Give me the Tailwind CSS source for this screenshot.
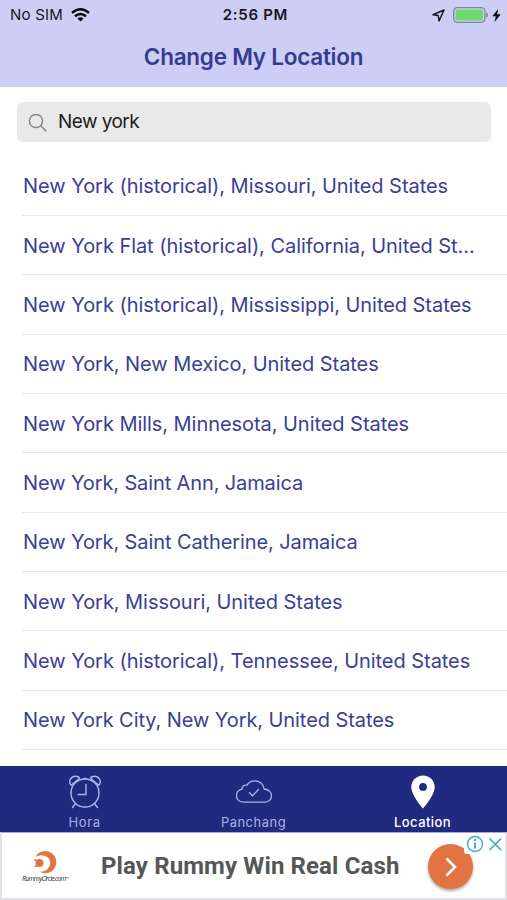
<!DOCTYPE html>
<html lang="en">
<head>
<meta charset="utf-8">
<title>Change My Location</title>
<script src="https://cdn.jsdelivr.net/npm/@tailwindcss/browser@4"></script>
</head>
<body class="bg-white">
<div class="w-[507px] h-[900px] overflow-hidden flex flex-col bg-[#fefefe] font-['Inter',sans-serif]">
  <header class="h-[87px] shrink-0 bg-[#cccef5]">
    <div class="h-[30px] grid grid-cols-3 items-center pl-[10px] pr-[6px] text-[15px] text-[#16161f]">
      <div class="flex items-center gap-[8px]">
        <span class="tracking-[0.220px] whitespace-nowrap">No SIM</span>
        <svg class="w-[19px] h-[14px]" viewBox="0 0 19 14" fill="none" stroke="#08080c" stroke-width="2.500"><path d="M1 4.900Q9.500-2.300 18 4.900M4 8.200Q9.500 3.700 15 8.200"/><path d="M6.500 10.500Q9.500 8.200 12.500 10.500L9.500 13.500Z" fill="#08080c" stroke="none"/></svg>
      </div>
      <div class="text-center font-semibold whitespace-nowrap tracking-[0.700px]">2:56 PM</div>
      <div class="flex items-center justify-end">
        <svg class="w-[13px] h-[13px] mr-[8px]" viewBox="0 0 13 13" fill="none" stroke="#16161f" stroke-width="1.500" stroke-linejoin="round"><path d="M12 1L1 5.700L6.200 6.500L7 12Z"/></svg>
        <svg class="w-[35px] h-[16px] mr-[4px]" viewBox="0 0 35 16"><rect x=".7" y=".7" width="31.300" height="14.600" rx="3.700" fill="none" stroke="#85859f" stroke-width="1.300"/><rect x="2.600" y="2.600" width="27.500" height="10.800" rx="1.800" fill="#6fd96c"/><path d="M33.200 5.200Q35 6 35 8T33.200 10.800Z" fill="#85859f"/></svg>
        <svg class="w-[9px] h-[13px]" viewBox="0 0 9 13" fill="#08080c"><path d="M6.200 0L.3 7.200H3.800L2.600 13L8.700 5.200H5.100Z"/></svg>
      </div>
    </div>
    <h1 class="h-[54px] flex items-center justify-center text-[22.500px] font-semibold tracking-[-0.250px] text-[#353b8f] whitespace-nowrap">Change My Location</h1>
  </header>

  <div class="pt-[15px] px-[17px] shrink-0">
    <div class="h-[40px] w-[474px] rounded-[6px] bg-[#e9e9e9] flex items-center pt-px pl-[11px] gap-[10px] text-[19px] text-[#1c1c1c]">
      <svg class="w-[20px] h-[20px]" viewBox="0 0 20 20" fill="none" stroke="#88888b" stroke-width="1.500"><circle cx="8" cy="8" r="6.600"/><path d="M12.800 12.800L18.300 18.400"/></svg>
      <span class="tracking-[-0.550px]">New york</span>
    </div>
  </div>

  <ul class="pt-[14.500px] pl-[22px] flex-1 min-h-0 overflow-hidden text-[20px] tracking-[-0.050px] text-[#3b4093]">
    <li class="h-[59.350px] border-b border-[#e8e8ea] flex items-center whitespace-nowrap pl-[1px] pt-px">New York (historical), Missouri, United States</li>
    <li class="h-[59.350px] border-b border-[#e8e8ea] flex items-center whitespace-nowrap pl-[1px] pt-px">New York Flat (historical), California, United St...</li>
    <li class="h-[59.350px] border-b border-[#e8e8ea] flex items-center whitespace-nowrap pl-[1px] pt-px">New York (historical), Mississippi, United States</li>
    <li class="h-[59.350px] border-b border-[#e8e8ea] flex items-center whitespace-nowrap pl-[1px] pt-px">New York, New Mexico, United States</li>
    <li class="h-[59.350px] border-b border-[#e8e8ea] flex items-center whitespace-nowrap pl-[1px] pt-px">New York Mills, Minnesota, United States</li>
    <li class="h-[59.350px] border-b border-[#e8e8ea] flex items-center whitespace-nowrap pl-[1px] pt-px tracking-[-0.120px]">New York, Saint Ann, Jamaica</li>
    <li class="h-[59.350px] border-b border-[#e8e8ea] flex items-center whitespace-nowrap pl-[1px] pt-px tracking-[-0.100px]">New York, Saint Catherine, Jamaica</li>
    <li class="h-[59.350px] border-b border-[#e8e8ea] flex items-center whitespace-nowrap pl-[1px] pt-px">New York, Missouri, United States</li>
    <li class="h-[59.350px] border-b border-[#e8e8ea] flex items-center whitespace-nowrap pl-[1px] pt-px">New York (historical), Tennessee, United States</li>
    <li class="h-[59.350px] border-b border-[#e8e8ea] flex items-center whitespace-nowrap pl-[1px] pt-px tracking-[-0.080px]">New York City, New York, United States</li>
  </ul>

  <nav class="h-[66px] shrink-0 bg-[#202a7f] grid grid-cols-3 text-[13px] text-[#a9b2e0]">
    <div class="flex flex-col items-center pt-[9px]">
      <svg class="w-[34px] h-[34px]" viewBox="0 0 34 34" fill="none" stroke="#a9b6ec" stroke-width="1.400" stroke-linecap="round"><circle cx="17" cy="18" r="14"/><path d="M18 9.500V19.500H10.200M7.500 28.500L4.500 32.500M26.500 28.500L29.500 32.500M15.800 3.500H18.200"/><path d="M3.200 10.200C-.5 6 3.500 1.200 7.500 1.200C9.500 1.200 11 2 11.500 3.200ZM30.800 10.200C34.500 6 30.500 1.200 26.500 1.200C24.500 1.200 23 2 22.500 3.200Z" stroke-linejoin="round"/></svg>
      <span class="mt-[4px] leading-[18px] tracking-[0.650px]">Hora</span>
    </div>
    <div class="flex flex-col items-center pt-[9px]">
      <svg class="w-[38px] h-[34px]" viewBox="0 0 38 34" fill="none" stroke="#a9b6ec" stroke-width="1.300" stroke-linejoin="round" stroke-linecap="round"><path d="M9 27.200C4.500 27.200 1.500 24.500 1.500 20.700C1.500 17.200 4 14.800 7 14.200C6.800 11.500 9 9.500 12 10.200C13.500 7 16.500 5.800 19.800 5.800C24.500 5.800 28.500 9.200 29.200 14C33.500 14.500 36.500 17.200 36.500 20.800C36.500 24.500 33.500 27.200 29.500 27.200Z"/><path d="M14.500 17.800L17.500 20.700L23.500 14.500"/></svg>
      <span class="mt-[4px] leading-[18px] tracking-[0.480px]">Panchang</span>
    </div>
    <div class="flex flex-col items-center pt-[9px] text-white">
      <svg class="w-[24px] h-[34px]" viewBox="0 0 24 34" fill="#fff"><path fill-rule="evenodd" d="M12 .5C5.500 .5 .3 5.500 .3 12C.3 20.500 12 33.500 12 33.500S23.700 20.500 23.700 12C23.700 5.500 18.500 .5 12 .5ZM12 8A3.900 3.900 0 1 1 12 15.800A3.900 3.900 0 1 1 12 8Z"/></svg>
      <span class="mt-[4px] leading-[18px] font-medium tracking-[0.400px]">Location</span>
    </div>
  </nav>

  <div class="h-[68px] shrink-0 relative flex items-center bg-[#fefefe] border-t border-t-[#a6a9d0] border-l-2 border-r-2 border-b-2 border-[#e2e2e4]">
    <div class="w-[46px] ml-[20px] pt-[2px] flex flex-col items-center">
      <svg class="w-[24px] h-[23px]" viewBox="0 0 24 23"><path d="M2.500 6A11 11 0 1 1 6.500 20.500Q13 21.500 16 16A7.500 7.500 0 0 0 11.500 4.700Q6 3.500 2.500 6Z" fill="#e27443"/><circle cx="6.500" cy="12" r="4" fill="#e27443"/><path d="M1.300 9L7 10M1.500 15.500L6 14" stroke="#e27443" stroke-width="1.500"/></svg>
      <span class="mt-[1px] text-[7px] leading-[8px] italic tracking-[-0.800px] text-[#333] whitespace-nowrap font-['Open_Sans',sans-serif]">RummyCircle.com<span class="text-[4px] align-top">™</span></span>
    </div>
    <div class="ml-[33px] font-['Roboto',sans-serif] font-bold text-[24px] tracking-[0.120px] text-[#555658] whitespace-nowrap">Play Rummy Win Real Cash</div>
    <div class="absolute left-[426px] top-[11px] w-[45px] h-[45px] rounded-full bg-[#e27443] shadow-[0_2px_3px_rgba(0,0,0,0.35)] flex items-center justify-center">
      <svg class="w-[12px] h-[20px]" viewBox="0 0 12 20" fill="none" stroke="#fff" stroke-width="2.600"><path d="M1.500 1.500L10 10L1.500 18.500"/></svg>
    </div>
    <svg class="absolute left-[462px] top-0 w-[41px] h-[21px]" viewBox="0 0 41 21" fill="none" stroke="#42a7cc"><path d="M0 0H41V21H3Q0 21 0 18Z" fill="#fefefe" stroke="none"/><circle cx="11" cy="11" r="7.500" stroke-width="1.400"/><path d="M11 9.500V15.500M11 6V8" stroke-width="1.900"/><path d="M25.500 5.500L37 17M37 5.500L25.500 17" stroke-width="1.700"/></svg>
  </div>
</div>
</body>
</html>
